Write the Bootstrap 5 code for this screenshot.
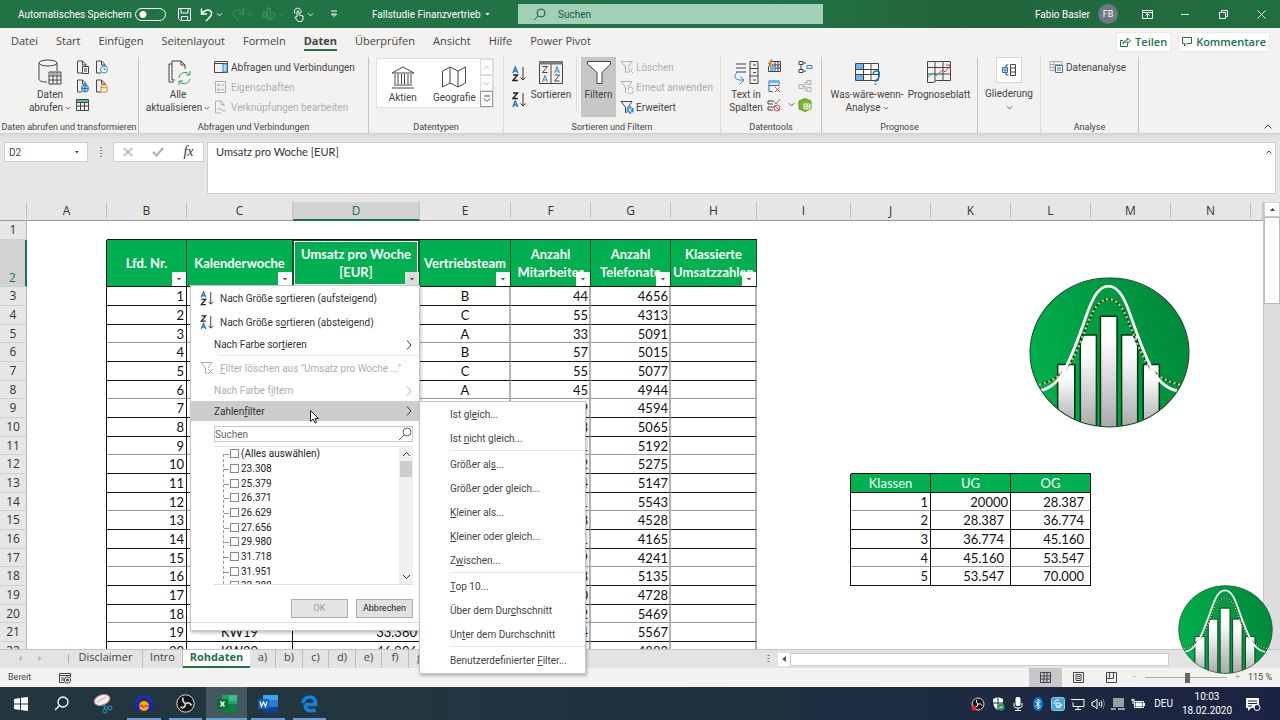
<!DOCTYPE html>
<html lang="de">
<head>
<meta charset="utf-8">
<meta name="viewport" content="width=device-width, initial-scale=1">
<title>Fallstudie Finanzvertrieb</title>
<link href="https://cdn.jsdelivr.net/npm/bootstrap@5.3.0/dist/css/bootstrap.min.css" rel="stylesheet">
<style>
:root{--xl:#217346;--cell:#00b050;--ink:#444;--dim:#aeaeae}
body{font:10px/13px Roboto,"Liberation Sans",sans-serif;color:var(--ink);background:#e6e6e6}
button,input{font:inherit;color:inherit;background:none;border:0;padding:0}
button{line-height:13px}
svg{display:block;flex:none;fill:none;stroke:currentColor}
svg.solid{fill:#fff;stroke:none}
a{color:inherit;text-decoration:none}
.off{color:var(--dim)}
.chev{width:7px;height:7px}
/* title bar */
.titlebar{height:28px;background:linear-gradient(90deg,#217346 60%,#23643c 75%,#1f6f41);color:#fff}
.autosave{margin-left:18px;width:148px}
.autosave .form-check-input{width:31px;height:13px;margin:0;float:none;background:radial-gradient(circle at 7px 50%,#fff 3px,transparent 4px);border:1px solid #fff}
.quick{width:168px;margin-left:11px;gap:8px}
.quick .chev{margin-left:-6px}
.quick .off{color:#4d9169}
.doc-name{width:118px;margin-left:27px}
.finder{width:305px;height:20px;margin-left:28px;background:#a0d0b5;color:#1e5c39;padding-left:15px}
.finder input{color:#1e5c39}
.finder input::placeholder,.pick-search input::placeholder{color:inherit;opacity:1}
.avatar{width:20px;height:20px;background:#6d7b80;font-size:9px;margin-right:10px}
.win-btn{width:38px;height:28px}
/* tabs */
.menu-tabs{height:27px;background:#f3f2f1;font:11px/16px "Open Sans",sans-serif;padding-left:11px}
.menu-tabs .nav-tabs-row{gap:18px}
.menu-tabs .current{font-weight:700;border-bottom:2px solid var(--xl)}
.share-btn{height:20px;background:#fff;border:1px solid #eae9e8;color:var(--xl);font:600 11px/16px "Open Sans",sans-serif;padding:0 3px}
.share-end{margin:0 10px 0 7px}
/* ribbon */
.ribbon{height:79px;background:#f3f2f1;border-bottom:1px solid #d2d0ce;padding-top:2px}
.rgroup{height:76px;border-right:1px solid #c3c1bf;display:flex;flex-direction:column;flex:none}
.rgroup.soft{border-color:#dedcda}
.rbody{height:61px;flex:none;display:flex}
.rlabel{font-size:9px;line-height:12px;text-align:center;padding-top:3px;white-space:nowrap}
.g-get{width:139px}.g-conn{width:230px}.g-type{width:135px}.g-sort{width:217px}.g-tool{width:101px}.g-prog{width:156px}.g-outl{width:63px}.g-ana{width:98px}
.big{display:flex;flex-direction:column;align-items:center;padding-top:2px;text-align:center}
.big svg{width:26px;height:26px;margin-bottom:3px}
.big .chev{display:inline-block;width:6px;height:6px;margin:0 0 0 2px}
.w-get{width:52px}.w-all{width:70px}.w-sort{width:42px}.w-split{width:42px}.w-what{width:74px}.w-fore{width:70px}
.mini-grid{display:grid;grid-auto-rows:19px;align-items:center}
.cols-2{grid-template-columns:19px 19px}
.cols-3{grid-template-columns:17px 14px 16px}
.rlist{display:flex;flex-direction:column}
.rlist button{height:20px;display:flex;align-items:center;gap:2px;white-space:nowrap}
.gallery{width:118px;height:50px;background:#fff;border:1px solid #e1dfdd;margin:1px 0 0 7px}
.gallery .big{width:52px;padding-top:6px}
.gallery .big svg{width:26px;height:24px;margin-bottom:2px}
.gal-nav{width:13px;display:grid;grid-template-rows:1fr 1fr 1fr}
.gal-nav button{border:1px solid #dddbd9;display:grid;place-items:center}
.gal-nav button:last-child{border-color:#999}
.sort-split{border-left:1px solid #dedcda;height:54px}
.filter-on{background:#c6c6c6;width:35px;height:60px}
.outl-box{width:26px;height:26px;background:#fff;border:1px solid #d8d6d4}
/* formula bar */
.formula{height:68px;padding:8px 4px 8px 4px;background:linear-gradient(#d8d8d8,#e6e6e6 6px)}
.fbox{height:20px;background:#fff;border:1px solid #cfcfcf}
.name-box{width:84px}
.fx-box{width:91px;margin-left:6px}
.fx-sign{font:italic 14px/16px "Liberation Serif",serif;color:#333}
.formula-text{background:#fff;border:1px solid #cfcfcf;height:52px;margin-left:3px;resize:none;padding:2px 8px;font:11px/14px Lato,sans-serif;color:#333}
/* worksheet */
.sheet-wrap{min-height:0;background:#fff}
.sheet-view{height:100%}
.sheet{border-collapse:separate;border-spacing:0;table-layout:fixed;width:100%;font:13px/16px Lato,"Open Sans",sans-serif;color:#111}
.sheet td,.sheet th{padding:0 2px;height:19px;white-space:nowrap;overflow:hidden;text-align:right;font-weight:400}
.sheet tr.r18 td,.sheet tr.r18 th{height:18px}
.sheet .center{text-align:center}
.sheet th{font:12px/16px "Open Sans",sans-serif}
.sheet thead th{height:19px;background:#e6e6e6;text-align:center;border-right:1px solid #c4c4c4;border-bottom:1px solid #9a9a9a;color:#333;padding:0}
.sheet thead th.sel{background:#d2d2d2;border-bottom:2px solid var(--xl);color:var(--xl)}
.sheet tbody th{background:#e6e6e6;border-right:1px solid #b4b4b4;border-bottom:1px solid #cfcfcf;text-align:center;color:#333;padding:0}
.sheet tbody tr.head th{background:#d2d2d2;border-right:2px solid var(--xl);vertical-align:bottom;color:var(--xl)}
.sheet td.b{border-right:1px solid #111;border-bottom:1px solid #111}
.sheet td.e{border-right:2px solid #b4b4b4;padding-right:1px}
.sheet tr.r18 td.b{border-bottom-color:#9a9a9a}
.sheet td.lb{border-right:1px solid #111}
.sheet td.bb{border-bottom:1px solid #111}
.sheet td.val{padding-right:6px}
.sheet tr.head td,.sheet tr.head th{height:47px}
.sheet td.hd{background:var(--cell);color:#fff;font-weight:700;line-height:18px;text-align:center;padding:0;position:relative;border-right:1px solid #14502c}
.sheet td.kh{background:var(--cell);color:#fff;text-align:center}
.sheet td.cur{box-shadow:inset 0 0 0 1px #14502c,inset 0 0 0 2px #fff}
.drop{position:absolute;right:0;bottom:0;width:14px;height:14px;background:#fff;display:grid;place-items:center;color:#555}
.cur .drop{background:#dcdcdc}
.tri{width:5px;height:3px;background:currentColor;clip-path:polygon(0 0,100% 0,50% 100%)}
.flip{rotate:180deg}
.vbar{width:17px;background:#dcdcdc;border-left:1px solid #c8c8c8}
.vbar .arrow{height:15px;background:#fff;border:1px solid #d0d0d0;display:grid;place-items:center}
.vbar .thumb{height:87px;background:#fff;border:1px solid #bbb}
.logo-cell{position:absolute;left:1029px;top:75px;width:161px;height:151px}
.logo-cam{position:fixed;right:7px;bottom:45px;width:95px;height:91px;z-index:30}
/* filter menus */
.flyout{position:absolute;background:#fff;border:1px solid #c6c6c6;box-shadow:1px 2px 3px rgba(0,0,0,.25);z-index:10;color:#333}
.filter-menu{left:190px;top:83px;width:230px;height:346px}
.filter-menu .item{display:flex;align-items:center;width:100%;height:24px;padding:0 6px 0 23px;text-align:left;white-space:nowrap}
.filter-menu .item.lead-icon{padding-left:9px}
.filter-menu .item.lead-icon svg:first-child{margin-right:6px}
.filter-menu .item.low{height:21px}
.filter-menu .item.hot{height:20px;background:#cdcdcd}
.filter-menu .rule{margin-left:27px;border-top:1px solid #e4e4e4}
.pick-search{margin:5px 6px 0 23px;height:16px;border:1px solid #c9c9c9;color:#666}
.pick-list{margin:4px 6px 0 23px;height:139px;border-top:1px solid #e8e8e8;border-bottom:1px solid #ddd;overflow:hidden}
.tree{margin:7px 0 0 9px;padding:0;list-style:none;border-left:1px dashed #999}
.tree li{height:15px}
.tree li:nth-child(3n){height:14px}
.tree li:first-child{margin-top:-7px}
.tree label{display:flex;align-items:center;color:#222;line-height:14px}
.tree label::before{content:"";width:5px;border-top:1px dashed #999;margin-right:1px}
.tree .form-check-input{width:9px;height:9px;margin:0 2px 2px 0;border:1px solid #888;border-radius:0;background:#fff}
.pick-scroll{width:14px;background:#f0f0f0}
.pick-scroll i{display:block;width:12px;height:16px;background:#cdcdcd}
.dlg-row{padding-right:6px;margin-top:14px}
.dlg-btn{width:57px;height:19px;background:#e1e1e1;border:1px solid #adadad;font-size:9px;color:#222}
.dlg-btn:disabled{color:#999;background:#e4e4e4}
.number-menu{left:419px;top:199px;width:167px;height:273px;padding:0 0 0 30px;color:#444}
.number-menu button{display:block;height:24px;width:100%;text-align:left}
.number-menu .rule{height:2px;border-top:1px solid #e6e6e6}
.pointer{position:absolute;left:310px;top:208px;z-index:20}
/* sheet tabs, status bar */
.sheet-tabs{height:19px;background:#e3e3e3;border-top:1px solid #c4c4c4;font:11px/14px "Open Sans",sans-serif}
.sheet-tabs a{width:26px;text-align:center;border-right:1px solid #bdbdbd}
.sheet-tabs a:nth-of-type(odd){width:27px}
.sheet-tabs a.t-disc{width:74px}.sheet-tabs a.t-intro{width:40px}
.sheet-tabs a.t-roh{width:67px;background:#fff;color:var(--xl);font-weight:700;border-right:0;border-bottom:2px solid var(--xl)}
.hbar{width:486px;height:13px;margin-right:16px}
.hbar .thumb{width:379px;background:#fff;border:1px solid #ccc}
.status{height:19px;background:#f3f2f1;font-size:9px}
.status .view{width:33px;height:19px;display:grid;place-items:center}
.status .view.on{background:#c8c8c8}
.zoom-range{-webkit-appearance:none;appearance:none;width:82px;height:11px;background:linear-gradient(#aaa,#aaa) center/100% 1px no-repeat}
.zoom-range::-webkit-slider-thumb{-webkit-appearance:none;width:5px;height:10px;background:#666}
/* taskbar */
.taskbar{height:33px;background:linear-gradient(90deg,#22363f 30%,#1f2f40 60%,#1a2342);color:#fff}
.task{width:41px;height:33px;display:grid;place-items:center;position:relative}
.task.wide{width:42px}
.task.run::after{content:"";position:absolute;bottom:0;left:4px;right:4px;height:2px;background:#6f9cd0}
.task.active{background:#45575f}
.task.active::after{left:0;right:0}
.tray{gap:4px;padding-right:19px}
.tray svg{width:16px;height:16px}
.clock{width:52px;text-align:center;line-height:14px}
</style>
</head>
<body class="vh-100 d-flex flex-column overflow-hidden">

<svg width="0" height="0" class="position-absolute" aria-hidden="true">
  <defs>
    <linearGradient id="bar" x1="0" y1="0" x2="0" y2="1"><stop offset=".2" stop-color="#fff"/><stop offset="1" stop-color="#a8a8a8"/></linearGradient>
    <linearGradient id="disc" x1="0" y1="0.6" x2="1" y2="0.3"><stop offset="0" stop-color="#00b04c"/><stop offset="1" stop-color="#00883a"/></linearGradient>
    <clipPath id="oval"><ellipse cx="80" cy="75" rx="79" ry="74"/></clipPath>
  </defs>
  <symbol id="chev" viewBox="0 0 8 8"><path d="M1 2.500l3 3 3-3"/></symbol>
  <symbol id="right" viewBox="0 0 8 12"><path d="M2 1.500l4 4.500-4 4.500"/></symbol>
  <symbol id="az" viewBox="0 0 14 16"><path d="M.8 7L3.300 1l2.500 6M1.600 5h3.400" stroke="#1b78cc" stroke-width="1.400"/><path d="M1 9h4.500L1 14.500h4.800" stroke="#222" stroke-width="1.400"/><path d="M11 1v13M8.500 11.500L11 14l2.500-2.500" stroke="#333"/></symbol>
  <symbol id="za" viewBox="0 0 14 16"><path d="M.8 15l2.500-6 2.500 6M1.600 13h3.400" stroke="#1b78cc" stroke-width="1.400"/><path d="M1 1h4.500L1 6.500h4.800" stroke="#222" stroke-width="1.400"/><path d="M11 1v13M8.500 11.500L11 14l2.500-2.500" stroke="#333"/></symbol>
  <symbol id="doc" viewBox="0 0 14 14"><path d="M6 13H1.500V1H6.500L10 4.500V6M6.500 1v4H10"/></symbol>
  <symbol id="funnel-x" viewBox="0 0 14 14"><path d="M1 1.500h11L8 7M1 1.500L5.500 7v5.500l2-.8M8 8l5 5M13 8l-5 5"/></symbol>
  <symbol id="logo" viewBox="0 0 160 150">
    <ellipse cx="80" cy="75" rx="79" ry="74" fill="url(#disc)" stroke="none"/>
    <g clip-path="url(#oval)">
      <g fill="url(#bar)" stroke="#031" stroke-width="1.500"><path d="M28.500 87h17v63h-17zM113.500 87h16v63h-16z"/><path d="M51 57.500h16v93H51zM92 57.500h16v93H92z"/><path d="M71 39h16.500v111H71z"/></g>
      <path d="M10 107C22 104 28 100 35 93 43 84 47 74 52 63 60 42 66 22 79 22S98 42 106 63C111 74 115 84 123 93 130 100 138 104 150 107" stroke="#12401f" stroke-width="2"/>
      <path d="M10 107C22 104 28 100 35 93 43 84 47 74 52 63 60 42 66 22 79 22S98 42 106 63C111 74 115 84 123 93 130 100 138 104 150 107" stroke="#a3dd7e" stroke-width="2.200" stroke-dasharray="2.200 2.500"/>
      <path d="M11 113C24 110 32 100 37 89 44 75 49 61 54 47 62 23 68 9 79 9S96 23 104 47C109 61 114 75 121 89 126 100 134 110 147 113" stroke="#fff" stroke-width="2.800"/>
    </g>
    <ellipse cx="80" cy="75" rx="79" ry="74" stroke="#22432e"/>
  </symbol>
</svg>

<header class="titlebar d-flex align-items-center flex-shrink-0">
  <div class="autosave d-flex align-items-center justify-content-between p-0"><label for="auto">Automatisches Speichern</label><input class="form-check-input rounded-pill" type="checkbox" role="switch" id="auto"></div>
  <div class="quick d-flex align-items-center">
    <button aria-label="Speichern"><svg width="15" height="15" viewBox="0 0 15 15"><path d="M1.500 1.500h12v12h-10l-2-2zM4 1.500V6h7V1.500M4.500 13.500V9.500h6v4"/></svg></button>
    <button aria-label="Rückgängig"><svg width="14" height="15" viewBox="0 0 14 15" stroke-width="1.500"><path d="M1.500 1.500V7H7M1.500 7C4 3 9 2 11 4.500S11 9 6 14"/></svg></button>
    <svg class="chev"><use href="#chev"/></svg>
    <button class="off" aria-label="Wiederholen"><svg width="14" height="15" viewBox="0 0 14 15"><path d="M12.500 1.500V7H7M12.500 7C10 3 5 2 3 4.500S3 9 8 14"/></svg></button>
    <svg class="chev off"><use href="#chev"/></svg>
    <button class="off" aria-label="Diagramm"><svg width="14" height="14" viewBox="0 0 14 14"><path d="M1 5h3v5H1zM5 1h3v11H5zM9 6h4c0 4-2 6-5 7"/></svg></button>
    <svg class="chev off"><use href="#chev"/></svg>
    <button aria-label="Fingereingabe"><svg width="12" height="15" viewBox="0 0 12 15"><path d="M4 10V4.500q1-1.500 2 0V8l4 1v3l-1.500 2.500H5L2 10.500q1-1.500 2-.5M2 6.500C0 2 4 .5 6 1.500s3 3 1.500 5"/></svg></button>
    <svg class="chev"><use href="#chev"/></svg>
    <svg class="ms-2" width="8" height="8" viewBox="0 0 8 8"><path d="M1 1h6M1.500 4L4 6.500 6.500 4z"/></svg>
  </div>
  <button class="doc-name d-flex align-items-center justify-content-between">Fallstudie Finanzvertrieb <span class="tri"></span></button>
  <label class="finder d-flex align-items-center"><svg width="13" height="13" viewBox="0 0 13 13"><circle cx="8" cy="5" r="4"/><path d="M5 8l-4 4"/></svg><input class="ms-2 ps-1 flex-grow-1" type="search" placeholder="Suchen"></label>
  <div class="ms-auto d-flex align-items-center">
    <span class="me-2">Fabio Basler</span><span class="avatar rounded-circle d-grid text-center align-content-center">FB</span>
    <button class="win-btn d-grid justify-content-center align-content-center" aria-label="Menüband"><svg width="11" height="9" viewBox="0 0 11 9"><path d="M.5.500h10v8H.500zM.5 2.500h10M5.500 8V4M3.500 5.500l2-2 2 2"/></svg></button>
    <button class="win-btn d-grid justify-content-center align-content-center" aria-label="Minimieren"><svg width="10" height="9" viewBox="0 0 10 9"><path d="M1 4.500h8"/></svg></button>
    <button class="win-btn d-grid justify-content-center align-content-center" aria-label="Verkleinern"><svg width="9" height="9" viewBox="0 0 9 9"><path d="M.5 2.500h6v6h-6zM2.500 2V.500h6v6H7"/></svg></button>
    <button class="win-btn d-grid justify-content-center align-content-center" aria-label="Schließen"><svg width="9" height="9" viewBox="0 0 9 9"><path d="M.5.500l8 8M8.500.500l-8 8"/></svg></button>
  </div>
</header>

<nav class="menu-tabs d-flex align-items-center flex-shrink-0">
  <div class="nav-tabs-row d-flex">
    <a href="#">Datei</a><a href="#">Start</a><a href="#">Einfügen</a><a href="#">Seitenlayout</a><a href="#">Formeln</a><a href="#" class="current">Daten</a><a href="#">Überprüfen</a><a href="#">Ansicht</a><a href="#">Hilfe</a><a href="#">Power Pivot</a>
  </div>
  <button class="share-btn ms-auto d-flex align-items-center gap-1"><svg width="11" height="10" viewBox="0 0 11 10"><path d="M3 3.500H.500v6h7V7M3 7c0-3 2-4 4.500-4V1L10.500 4 7.500 6.500V5C5.500 5 4 5.500 3 7z"/></svg>Teilen</button>
  <button class="share-btn share-end d-flex align-items-center gap-1"><svg width="10" height="10" viewBox="0 0 10 10"><path d="M.5.500h9v6H5l-2.500 2.500V6.500h-2z"/></svg>Kommentare</button>
</nav>

<section class="ribbon d-flex flex-shrink-0">
  <div class="rgroup g-get">
    <div class="rbody">
      <button class="big w-get ms-4"><svg viewBox="0 0 26 26"><path d="M10 23C5 23 2 22 2 20V4M20 4v8"/><ellipse cx="11" cy="4" rx="9" ry="3"/><path d="M12 13h12v12H12zM12 17h12M12 21h12M16 13v12M20 13v12"/><path d="M12 14h12v2H12z" fill="#aaa" stroke="none"/></svg><span>Daten<br>abrufen<svg class="chev"><use href="#chev"/></svg></span></button>
      <div class="mini-grid cols-2 align-self-start">
        <button aria-label="Aus Text"><svg width="14" height="14"><use href="#doc"/><path d="M6.500 6.500h6v7h-6zM8 9h3M8 11h3"/></svg></button>
        <button aria-label="Zuletzt"><svg width="14" height="14"><use href="#doc"/><circle cx="9" cy="9.500" r="3.500" stroke="#2b88d8" fill="#fff"/><path d="M9 7.500v2h2" stroke="#2b88d8"/></svg></button>
        <button aria-label="Aus Web"><svg width="14" height="14"><use href="#doc"/><circle cx="9" cy="9.500" r="3.500" stroke="#1b74c4" fill="#9bd0f5"/><path d="M5.500 9.500h7M9 6v7" stroke="#1b74c4"/></svg></button>
        <button aria-label="Verbindungen"><svg width="14" height="14"><use href="#doc"/><path d="M6 7.500c0-2 6-2 6 0v5c0 1-6 1-6 0zM6 8c0 1 6 1 6 0" stroke="#e07a10" fill="#fff"/></svg></button>
        <button aria-label="Aus Tabelle"><svg width="14" height="14" viewBox="0 0 14 14"><path d="M.5 1.500h12v11H.500zM.5 4.500h12M.5 8h12M4.500 4.500v8M8.500 4.500v8"/><path d="M1 2h11v2H1z" fill="#5bb" stroke="none"/></svg></button>
      </div>
    </div>
    <div class="rlabel">Daten abrufen und transformieren</div>
  </div>
  <div class="rgroup g-conn">
    <div class="rbody">
      <button class="big w-all ms-1"><svg viewBox="0 0 26 26"><path d="M10 21H7V2h9l4 4v4M16 2v4h4M7 5H4v18h5"/><path d="M14 19a6 6 0 0 1 11-3M25 12v4h-4M25 20a6 6 0 0 1-11 2M14 26v-4h4" stroke="#3a9b62"/></svg><span class="text-nowrap">Alle<br>aktualisieren<svg class="chev"><use href="#chev"/></svg></span></button>
      <div class="rlist">
        <button><svg width="16" height="14" viewBox="0 0 16 14"><path d="M1.500 1.500h13v11h-13zM1.500 3.500h13"/><path d="M10 4h4v8h-4z" fill="#b5dcf5" stroke="#2b88d8"/></svg>Abfragen und Verbindungen</button>
        <button class="off"><svg width="16" height="14" viewBox="0 0 16 14"><path d="M2.500 1.500h10v11h-10zM4.500 4.500h2v1h-2zM4.500 9h2v1h-2zM8 5h3M8 9.500h3"/></svg>Eigenschaften</button>
        <button class="off"><svg width="16" height="14" viewBox="0 0 16 14"><path d="M8 13H2.500V1H8l3 3v3M8 1v3.500h3M5 10q2-3 4 0t4 0"/></svg>Verknüpfungen bearbeiten</button>
      </div>
    </div>
    <div class="rlabel">Abfragen und Verbindungen</div>
  </div>
  <div class="rgroup g-type soft">
    <div class="rbody">
      <div class="gallery d-flex">
        <button class="big"><svg viewBox="0 0 26 24"><path d="M2 8L13 2l11 6zM4 20h18M2 23h22M5 9v10M8 9v10M11.500 9v10M14.500 9v10M18 9v10M21 9v10"/></svg>Aktien</button>
        <button class="big"><svg viewBox="0 0 26 24"><path d="M1.500 6L9 2l8 4 7.500-4v16L17 22l-8-4-7.500 4zM9 2v16M17 6v16"/></svg>Geografie</button>
        <div class="gal-nav"><button class="off" aria-label="Hoch"><svg class="chev flip"><use href="#chev"/></svg></button><button class="off" aria-label="Runter"><svg class="chev"><use href="#chev"/></svg></button><button aria-label="Mehr"><svg width="8" height="8" viewBox="0 0 8 8"><path d="M1 1h6M1 3.500L4 6.500 7 3.500"/></svg></button></div>
      </div>
    </div>
    <div class="rlabel">Datentypen</div>
  </div>
  <div class="rgroup g-sort soft">
    <div class="rbody">
      <div class="d-flex flex-column gap-2 ms-2 pt-2"><button aria-label="Aufsteigend"><svg width="14" height="18" viewBox="0 0 14 16"><use href="#az"/></svg></button><button aria-label="Absteigend"><svg width="14" height="18" viewBox="0 0 14 16"><use href="#za"/></svg></button></div>
      <button class="big w-sort ms-1 me-1"><svg viewBox="0 0 26 26"><path d="M1.500 2.500h23v22h-23zM13 5v20"/><path d="M1 2h24v3.500H1z" fill="#777" stroke="none"/><path d="M4.500 7.500h5l-5 6h5M16.500 16h5l-5 6h5"/><path d="M4.500 23L7 16.500 9.500 23M5.500 21h3M16.500 14L19 7.500l2.500 6.500M17.500 12h3" stroke="#2b88d8"/></svg>Sortieren</button>
      <div class="sort-split"></div>
      <button class="big filter-on ms-1"><svg viewBox="0 0 26 26"><path d="M1.500 2.500h23V5L16 13.500v11h-5v-11L1.500 5z" fill="#fff"/></svg>Filtern</button>
      <div class="rlist ms-1">
        <button class="off"><svg width="14" height="14"><use href="#funnel-x"/></svg>Löschen</button>
        <button class="off"><svg width="14" height="14" viewBox="0 0 14 14"><path d="M1 1.500h11L8 7M1 1.500L5.500 7v5.500h1M8 10a2.500 2.500 0 0 1 5-.5M13 11a2.500 2.500 0 0 1-5 1"/></svg>Erneut anwenden</button>
        <button><svg width="14" height="14" viewBox="0 0 14 14"><path d="M1 1.500h11L8 7M1 1.500L5.500 7v5.500h1"/><circle cx="10" cy="10" r="2.500" stroke="#2b88d8" stroke-width="2.500" stroke-dasharray="2 .7"/></svg>Erweitert</button>
      </div>
    </div>
    <div class="rlabel">Sortieren und Filtern</div>
  </div>
  <div class="rgroup g-tool">
    <div class="rbody">
      <button class="big w-split ms-1"><svg viewBox="0 0 26 26"><path d="M3 5h10M3 9h10M3 13h10M17 2.500h8v22h-8zM17 9.500h8M17 17h8M20 6h3M20 13.500h3M20 21h3"/><path d="M5 13c-6 4-3 9 5 8M7 17.500l4 3.500-4 4" stroke="#2b88d8"/></svg><span class="text-nowrap">Text in<br>Spalten</span></button>
      <div class="mini-grid cols-3 align-self-start">
        <button aria-label="Blitzvorschau"><svg width="15" height="15" viewBox="0 0 15 15"><path d="M3.500 2.500h10v10h-12V7M3 9h10M8 3v9M11 3v9M3 6h10"/><path d="M3 7h5v5H3z" fill="#6db8f0" stroke="none"/><path d="M5 .5L2 4.500h2L1.500 8" stroke="#e07a10" stroke-width="1.500"/></svg></button><span></span>
        <button aria-label="Konsolidieren"><svg width="15" height="14" viewBox="0 0 15 14"><path d="M1 1.500h4v3H1zM1 9.500h4v3H1zM5 3h3M3 5v4M5 11h3"/><path d="M9 5.500h5v3H9z" stroke="#2b88d8"/></svg></button>
        <button aria-label="Duplikate entfernen"><svg width="15" height="14" viewBox="0 0 15 14"><path d="M2 1.500h10v5H2zM2 6.500v6h4" stroke="#2b6cb0"/><path d="M2 1h10v3H2z" fill="#6db8f0" stroke="none"/><path d="M8 8l5 5M13 8l-5 5" stroke="#e04050"/></svg></button><span></span>
        <button class="off" aria-label="Beziehungen"><svg width="15" height="14" viewBox="0 0 15 14"><path d="M1 5.500h4v4H1zM9 1.500h4v4H9zM9 8.500h4v4H9zM5 7h2V3.500h2M7 7v4h2"/></svg></button>
        <button aria-label="Datenüberprüfung"><svg width="15" height="14" viewBox="0 0 15 14"><path d="M7 3H1v3h5M7 9H1v3h5"/><path d="M7 4l2 2 4-5" stroke="#3a9b62"/><circle cx="10" cy="10" r="3" stroke="#e04050"/><path d="M8 8l4 4" stroke="#e04050"/></svg></button><svg class="chev ms-1"><use href="#chev"/></svg>
        <button aria-label="Datenmodell"><svg width="15" height="14" viewBox="0 0 15 14"><path d="M1 3l6-2.500L13 3v8l-6 2.500L1 11z" fill="#77b82a" stroke="#5d9a1a"/><path d="M6 6h6v5H6zM9 6v5M6 8.500h6" stroke="#fff"/></svg></button>
      </div>
    </div>
    <div class="rlabel">Datentools</div>
  </div>
  <div class="rgroup g-prog">
    <div class="rbody">
      <button class="big w-what ms-2"><svg viewBox="0 0 26 26"><path d="M1.500 4.500h23v17h-23z" fill="#fff"/><path d="M2 5h7v5H2zM2 16h7v5H2z" fill="#6db8f0" stroke="none"/><path d="M1.500 10.500h23M1.500 15.500h23M9.500 4.500v17M17 4.500v17"/><path d="M19 16q0-4 3.500-4t3 4-4 6v1M21.500 24.500v1.500" stroke="#1b74c4" stroke-width="1.500"/></svg><span class="text-nowrap">Was-wäre-wenn-<br>Analyse<svg class="chev"><use href="#chev"/></svg></span></button>
      <button class="big w-fore"><svg viewBox="0 0 26 26"><path d="M1.500 2.500h23v19h-14l-3 2h-6zM1.500 8.500h23M1.500 15h23M9 2.500v20M17 2.500v19"/><path d="M2 18l5-4 3 3 3-3" stroke="#1b9bb4"/><path d="M13 14l4-3 2 2 5-6M20 6h4v4" stroke="#e04050"/></svg>Prognoseblatt</button>
    </div>
    <div class="rlabel">Prognose</div>
  </div>
  <div class="rgroup g-outl soft">
    <button class="d-flex flex-column align-items-center"><span class="outl-box d-grid justify-content-center align-content-center mb-1"><svg width="14" height="12" viewBox="0 0 14 12"><path d="M8.500.500h5v11h-5zM8.500 4h5M8.500 8h5M6.500 1H4v10h2.500"/><path d="M.5 3.500h5v5h-5zM3 4.500v3M1.500 6h3" stroke="#2b6cb0" fill="#cfe6f8"/></svg></span>Gliederung<svg class="chev mt-1"><use href="#chev"/></svg></button>
  </div>
  <div class="rgroup g-ana">
    <div class="rbody rlist"><button class="ms-2"><svg width="15" height="14" viewBox="0 0 15 14"><path d="M1 1.500h12v9H1zM1 4.500h12M1 7.500h12M5 1.500v9" stroke="#aaa"/><path d="M6.500 5.500h7v7h-7zM8 8h4M8 10h4" stroke="#456a9c" fill="#fff"/></svg>Datenanalyse</button></div>
    <div class="rlabel">Analyse</div>
  </div>
  <button class="ms-auto me-2 mt-auto mb-1" aria-label="Menüband reduzieren"><svg width="8" height="5" viewBox="0 0 8 5"><path d="M.5 4.500L4 1l3.500 3.500"/></svg></button>
</section>

<section class="formula d-flex align-items-start flex-shrink-0">
  <div class="fbox name-box d-flex align-items-center px-1"><input class="w-100" aria-label="Namenfeld" value="D2"><span class="tri me-1"></span></div>
  <svg class="ms-2 mt-1 me-1 text-secondary" width="7" height="12" viewBox="0 0 7 12"><path d="M5 1v10" stroke-width="2" stroke-dasharray="1 2"/></svg>
  <div class="fbox fx-box d-flex align-items-center justify-content-around">
    <button class="off" aria-label="Abbrechen"><svg width="10" height="10" viewBox="0 0 10 10" stroke-width="1.500"><path d="M1 1l8 8M9 1L1 9"/></svg></button>
    <button class="off" aria-label="Eingeben"><svg width="12" height="10" viewBox="0 0 12 10" stroke-width="2"><path d="M1 5l3.500 3.500L11 1"/></svg></button>
    <button class="fx-sign">fx</button>
  </div>
  <div class="flex-grow-1 d-flex position-relative">
    <textarea class="formula-text flex-grow-1" aria-label="Bearbeitungsleiste">Umsatz pro Woche [EUR]</textarea>
    <button class="position-absolute top-0 end-0 mt-2 me-1" aria-label="Bearbeitungsleiste reduzieren"><svg width="6" height="4" viewBox="0 0 6 4"><path d="M.5 3.500L3 1l2.500 2.500"/></svg></button>
  </div>
</section>

<main class="sheet-wrap flex-grow-1 d-flex position-relative">
  <div class="sheet-view flex-grow-1 overflow-hidden">
    <table class="sheet">
      <colgroup id="cols"></colgroup>
      <thead><tr id="letters"></tr></thead>
      <tbody id="rows"></tbody>
    </table>
  </div>
  <div class="vbar flex-shrink-0"><div class="arrow"><span class="tri flip"></span></div><div class="thumb"></div></div>
  <svg class="logo-cell"><use href="#logo"/></svg>

  <div class="flyout filter-menu">
    <button class="item lead-icon"><svg width="14" height="15"><use href="#az"/></svg>Nach Größe s<u>o</u>rtieren (aufsteigend)</button>
    <button class="item lead-icon"><svg width="14" height="15"><use href="#za"/></svg>Nach Größe s<u>o</u>rtieren (absteigend)</button>
    <button class="item low">Nach Farbe sor<u>t</u>ieren<svg class="ms-auto" width="8" height="12"><use href="#right"/></svg></button>
    <div class="rule"></div>
    <button class="item lead-icon off"><svg width="14" height="14"><use href="#funnel-x"/></svg><span><u>F</u>ilter löschen aus "Umsatz pro Woche ..."</span></button>
    <button class="item low off">Nach Farbe f<u>i</u>ltern<svg class="ms-auto" width="8" height="12"><use href="#right"/></svg></button>
    <button class="item hot">Zahlen<u>f</u>ilter<svg class="ms-auto" width="8" height="12"><use href="#right"/></svg></button>
    <label class="pick-search d-flex align-items-center"><input class="flex-grow-1 ps-0" type="search" placeholder="Suchen"><svg width="14" height="14" viewBox="0 0 14 14"><circle cx="9" cy="5" r="4"/><path d="M6 8l-5 5"/></svg></label>
    <div class="pick-list d-flex">
      <ul class="tree flex-grow-1" id="picks"></ul>
      <div class="pick-scroll d-flex flex-column align-items-center py-1"><svg width="9" height="6" viewBox="0 0 9 6"><path d="M1 5l3.500-3.500L8 5"/></svg><i class="mt-1"></i><svg class="mt-auto" width="9" height="6" viewBox="0 0 9 6"><path d="M1 1l3.500 3.500L8 1"/></svg></div>
    </div>
    <div class="dlg-row d-flex justify-content-end gap-2"><button class="dlg-btn" disabled>OK</button><button class="dlg-btn">Abbrechen</button></div>
    <div class="border-top mt-1"></div>
  </div>

  <div class="flyout number-menu">
    <button>Ist gl<u>e</u>ich...</button><button>Ist <u>n</u>icht gleich...</button>
    <div class="rule"></div>
    <button>Größer al<u>s</u>...</button><button>Größer <u>o</u>der gleich...</button><button><u>K</u>leiner als...</button><button><u>K</u>leiner oder gleich...</button><button>Z<u>w</u>ischen...</button>
    <div class="rule"></div>
    <button><u>T</u>op 10...</button><button>Über dem Dur<u>c</u>hschnitt</button><button>Un<u>t</u>er dem Durchschnitt</button>
    <div class="rule"></div>
    <button>Benutzerdefinierter <u>F</u>ilter...</button>
  </div>
  <svg class="pointer" width="9" height="14" viewBox="0 0 9 14"><path d="M.5.500v11l2.500-2.500 2 4 1.500-.7L5 8.500h3.500z" fill="#fff" stroke="#222"/></svg>
</main>

<nav class="sheet-tabs d-flex flex-shrink-0">
  <svg class="off mt-1" width="69" height="9" viewBox="0 0 69 9"><path d="M21.500 2v5l-3-2.500zM38.500 2v5l3-2.500z" fill="currentColor" stroke="none"/><path d="M68.500 0v9"/></svg>
  <a class="t-disc" href="#">Disclaimer</a><a class="t-intro" href="#">Intro</a><a class="t-roh" href="#">Rohdaten</a><a href="#">a)</a><a href="#">b)</a><a href="#">c)</a><a href="#">d)</a><a href="#">e)</a><a href="#">f)</a><a href="#">g)</a>
  <svg class="ms-auto me-2 mt-1 text-secondary" width="3" height="11" viewBox="0 0 3 11"><path d="M1.500 1v9" stroke-dasharray="1 2" stroke-width="2"/></svg>
  <div class="hbar d-flex align-self-center"><button class="bg-white px-1" aria-label="Links"><svg width="4" height="6" viewBox="0 0 4 6"><path d="M4 0v6L0 3z" fill="#555" stroke="none"/></svg></button><div class="thumb"></div></div>
</nav>

<footer class="status d-flex align-items-center flex-shrink-0">
  <span class="px-1 ms-1">Bereit</span>
  <svg class="ms-4" width="13" height="12" viewBox="0 0 13 12"><path d="M5 10.500H.500v-9h11V5M.5 3.500h11M2 6h3M2 8h3"/><circle cx="8.500" cy="8" r="3.200"/><circle cx="8.500" cy="8" r="1" fill="currentColor"/></svg>
  <div class="ms-auto d-flex align-items-center">
    <button class="view on" aria-label="Normal"><svg width="11" height="11" viewBox="0 0 11 11"><path d="M.5.500h10v10H.500zM.5 4h10M.5 7h10M4 .5v10M7 .5v10"/></svg></button>
    <button class="view" aria-label="Seitenlayout"><svg width="11" height="11" viewBox="0 0 11 11"><path d="M.5.500h10v10H.500zM3 2.500h5v6H3zM4 4.500h3M4 6.500h3"/></svg></button>
    <button class="view" aria-label="Umbruch"><svg width="11" height="11" viewBox="0 0 11 11"><path d="M.5.500h10v10H.500zM3.500.500v6h4v-6M.5 6.500h3"/></svg></button>
    <span class="off px-1">−</span><input class="zoom-range mx-1" type="range" min="0" max="100" value="52" aria-label="Zoom"><span class="off px-1">+</span><span class="ms-1 me-2">115 %</span>
  </div>
</footer>

<div class="taskbar d-flex align-items-center flex-shrink-0">
  <button class="task" aria-label="Start"><svg class="solid" width="14" height="14" viewBox="0 0 14 14"><path d="M0 2l6-1v5.500H0zM7 .8L14 0v6.500H7zM0 7.500h6V13l-6-1zM7 7.500h7V14l-7-1z"/></svg></button>
  <button class="task" aria-label="Suche"><svg width="15" height="15" viewBox="0 0 15 15" stroke-width="1.300"><circle cx="9" cy="6" r="5"/><path d="M5.500 9.500L1 14"/></svg></button>
  <button class="task" aria-label="Snipping Tool"><svg width="20" height="20" viewBox="0 0 20 20"><ellipse cx="9" cy="6" rx="8" ry="5" fill="#eee" stroke="#c88" transform="rotate(-20 9 6)"/><path d="M4 8l9-5" stroke="#d99"/><circle cx="12" cy="17" r="2" stroke="#39c"/><circle cx="17" cy="14" r="2" stroke="#39c"/><path d="M12 15l-2-5M15 14l-5-4" stroke="#39c"/></svg></button>
  <button class="task wide run" aria-label="Audacity"><svg width="20" height="18" viewBox="0 0 20 18"><path d="M2.500 12C1 5 5 1.500 10 1.500s9 3.500 7.500 10.500" stroke="#1a2be0" stroke-width="2.500"/><rect x="1" y="8" width="4" height="8" rx="2" fill="#1420c0" stroke="none"/><rect x="15" y="8" width="4" height="8" rx="2" fill="#1420c0" stroke="none"/><ellipse cx="10" cy="11" rx="5" ry="5" fill="#f8a81c" stroke="none"/><path d="M5.500 11.500l2-1 2 1.500 2-1.500 3 1" stroke="#e0401c" stroke-width="1.500"/></svg></button>
  <button class="task run" aria-label="OBS"><svg width="19" height="19" viewBox="0 0 19 19"><circle cx="9.500" cy="9.500" r="8.700" fill="#151515" stroke="#ddd"/><path d="M9.500 9.500Q6 8 7 3.500M9.500 9.500q4-2 6 2M9.500 9.500q0 5-5 4" stroke="#ccc" stroke-width="1.800"/></svg></button>
  <button class="task run active" aria-label="Excel"><svg class="solid" width="20" height="18" viewBox="0 0 20 18"><rect x="5" width="15" height="18" rx="1" fill="#21a366"/><path d="M12 0h8v6h-8z" fill="#33c481"/><path d="M5 9h15v9H5z" fill="#107c41"/><rect y="4" width="11" height="10" rx="1" fill="#0f6b38"/><path d="M3.500 6.500l4 5M7.500 6.500l-4 5" stroke="#fff" stroke-width="1.500"/></svg></button>
  <button class="task wide run" aria-label="Word"><svg class="solid" width="20" height="18" viewBox="0 0 20 18"><rect x="5" width="15" height="18" rx="1" fill="#2b7cd3"/><path d="M5 0h15v5H5z" fill="#41a5ee"/><path d="M5 12h15v6H5z" fill="#103f91"/><rect y="4" width="11" height="10" rx="1" fill="#185abd"/><path d="M2 6.500l1.500 5 2-4.500 2 4.500 1.500-5" fill="none" stroke="#fff" stroke-width="1.200"/></svg></button>
  <button class="task run" aria-label="Edge"><svg width="17" height="18" viewBox="0 0 17 18"><path d="M4 9.500h10.500C15 4 12 2 9 2 5 2 2.500 5 1.500 8M4 9.500c0 7 7 7.500 10.500 5" stroke="#0d84dd" stroke-width="3.500"/></svg></button>
  <div class="tray ms-auto d-flex align-items-center">
    <svg viewBox="0 0 16 16"><circle cx="8" cy="8" r="6" fill="#151515" stroke="#ddd"/><path d="M8 8Q6 7 6.500 4M8 8q3-1 4 1.500M8 8q0 3-3 3"/><circle cx="4" cy="12" r="2.500" fill="#e22" stroke="none"/></svg>
    <svg viewBox="0 0 16 16"><path d="M3 3l5-2 5 2c0 6-1 9-5 11-4-2-5-5-5-11z" fill="#fff" stroke="none"/><path d="M8 1v13M3 7h10" stroke="#1f2f40"/><circle cx="11" cy="11" r="3.500" fill="#2a9d5a" stroke="none"/><path d="M9.500 11l1 1 2-2"/></svg>
    <svg viewBox="0 0 16 16"><rect x="6" y="1.500" width="4" height="8" rx="1" fill="#fff"/><path d="M4 7v3q0 2 4 2t4-2V7M8 12v2M5 14.500h6"/></svg>
    <svg viewBox="0 0 16 16"><ellipse cx="8" cy="8" rx="5" ry="7" fill="#0a78d6" stroke="none"/><path d="M5.500 5.500l5 5L8 13V3l2.500 2.500-5 5"/></svg>
    <svg viewBox="0 0 16 16"><rect x="1.500" y="1.500" width="13" height="13" rx="2" fill="#4aa3d8" stroke="#9cd"/><path d="M4 8q1-5 5-4M6 11q5 2 6-3M6 7h4v3H6z"/></svg>
    <svg viewBox="0 0 16 16"><path d="M4 3.500h10v7H3v-4M8 11v2M5 13.500h6M1 3.500h4"/></svg>
    <svg viewBox="0 0 16 16"><path d="M2 6h2l3-3v10L4 10H2zM9 6q1 2 0 4M11 4.500q2 3.500 0 7"/><path d="M13 3q3 5 0 10" stroke="#778"/></svg>
    <svg viewBox="0 0 16 16"><path d="M3 2h11v9H3zM1 12h5v2H1zM8 12h7v2H8z" fill="#9a9ea5" stroke="none"/></svg>
    <svg viewBox="0 0 16 16"><path d="M4.500 5.500h9v6h-9zM14.500 7v3"/><path d="M6 7h6v3H6z" fill="#fff"/><path d="M1 4h4M3 2.500V8"/></svg>
    <span class="px-1">DEU</span>
    <div class="clock">10:03<br>18.02.2020</div>
    <svg class="ms-2" viewBox="0 0 16 16"><path d="M1 2h13v10H6l-3 3v-3H1z" fill="#fff" stroke="none"/><path d="M3 5h9M3 7.500h9M3 10h4" stroke="#1a2342"/><circle cx="12" cy="11.500" r="3" stroke="#fff" fill="#1a2342"/></svg>
  </div>
</div>
<svg class="logo-cam"><use href="#logo"/></svg>

<script src="https://cdn.jsdelivr.net/npm/bootstrap@5.3.0/dist/js/bootstrap.bundle.min.js"></script>
<script>
const widths = [27,80,80,106,127,91,80,80,86,94,80,80,80,80,80];
document.getElementById('cols').innerHTML = widths.map(w => `<col style="width:${w}px">`).join('') + '<col>';
document.getElementById('letters').innerHTML = '<th></th>' + [...'ABCDEFGHIJKLMN'].map(c => `<th${c === 'D' ? ' class="sel"' : ''}>${c}</th>`).join('') + '<th></th>';

const heads = ['Lfd. Nr.','Kalenderwoche','Umsatz pro Woche<br>[EUR]','Vertriebsteam','Anzahl<br>Mitarbeiter','Anzahl<br>Telefonate','Klassierte<br>Umsatzzahlen'];
const weeks = {18:'KW19', 19:'KW20'};
const sales = {18:'33.380', 19:'46.906'};
const team = [...'BCABCA'];
const staff = [44,55,33,57,55,45,39,58,41,42,44,51,38,41,49,58,40,52,44];
const calls = [4656,4313,5091,5015,5077,4944,4594,5065,5192,5275,5147,5543,4528,4165,4241,5135,4728,5469,5567,4882];
const classes = [['1','20000','28.387'],['2','28.387','36.774'],['3','36.774','45.160'],['4','45.160','53.547'],['5','53.547','70.000']];
const blank = n => '<td></td>'.repeat(n);

let html = `<tr><th>1</th><td></td>${'<td class="bb"></td>'.repeat(7)}${blank(7)}</tr>`;
html += `<tr class="head"><th>2</th><td class="lb"></td>${heads.map((h, i) => `<td class="b hd${i === 2 ? ' cur' : ''}">${h}<button class="drop" aria-label="Filter"><span class="tri"></span></button></td>`).join('')}${blank(7)}</tr>`;
for (let i = 0; i < 20; i++) {
  const row = i + 3, k = row - 13;
  let side = blank(7);
  if (row === 12) side = blank(1) + '<td class="bb"></td>'.repeat(3) + blank(3);
  if (row === 13) side = '<td class="lb"></td>' + ['Klassen','UG','OG'].map(t => `<td class="b kh">${t}</td>`).join('') + blank(3);
  if (k > 0 && k < 6) side = '<td class="lb"></td>' + classes[k-1].map((t, c) => `<td class="b${c && t !== '20000' ? ' val' : ''}">${t}</td>`).join('') + blank(3);
  html += `<tr${row % 3 === 2 ? ' class="r18"' : ''}><th>${row}</th><td class="lb"></td><td class="b">${i+1}</td><td class="b center">${weeks[i] || ''}</td><td class="b">${sales[i] || ''}</td><td class="b e center">${team[i] || ''}</td><td class="b e">${staff[i] || ''}</td><td class="b e">${calls[i]}</td><td class="b e"></td>${side}</tr>`;
}
document.getElementById('rows').innerHTML = html;

document.getElementById('picks').innerHTML = ['(Alles auswählen)','23.308','25.379','26.371','26.629','27.656','29.980','31.718','31.951','32.380']
  .map((t, i) => `<li><label for="p${i}"><input class="form-check-input" type="checkbox" id="p${i}">${t}</label></li>`).join('');
</script>
</body>
</html>
